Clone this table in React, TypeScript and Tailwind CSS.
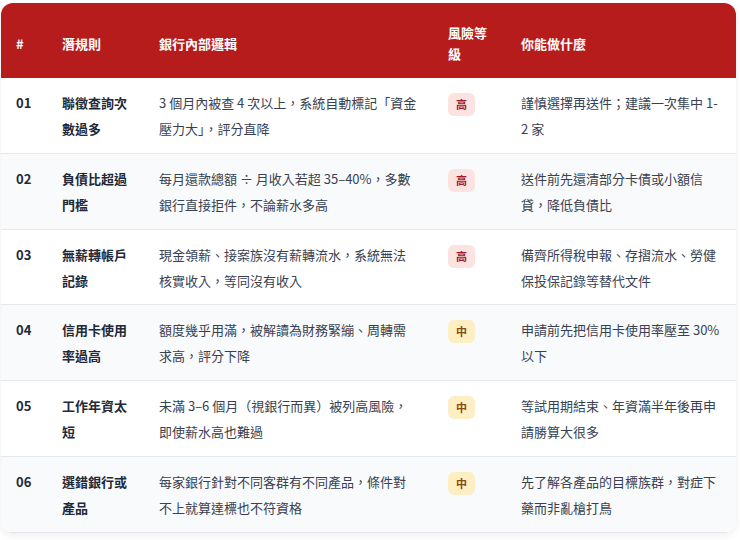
const rows = [
  {
    id: "01",
    rule: "聯徵查詢次數過多",
    logic: "3 個月內被查 4 次以上，系統自動標記「資金壓力大」，評分直降",
    level: "高",
    action: "謹慎選擇再送件；建議一次集中 1-2 家",
  },
  {
    id: "02",
    rule: "負債比超過門檻",
    logic: "每月還款總額 ÷ 月收入若超 35–40%，多數銀行直接拒件，不論薪水多高",
    level: "高",
    action: "送件前先還清部分卡債或小額信貸，降低負債比",
  },
  {
    id: "03",
    rule: "無薪轉帳戶記錄",
    logic: "現金領薪、接案族沒有薪轉流水，系統無法核實收入，等同沒有收入",
    level: "高",
    action: "備齊所得稅申報、存摺流水、勞健保投保記錄等替代文件",
  },
  {
    id: "04",
    rule: "信用卡使用率過高",
    logic: "額度幾乎用滿，被解讀為財務緊繃、周轉需求高，評分下降",
    level: "中",
    action: "申請前先把信用卡使用率壓至 30% 以下",
  },
  {
    id: "05",
    rule: "工作年資太短",
    logic: "未滿 3–6 個月（視銀行而異）被列高風險，即使薪水高也難過",
    level: "中",
    action: "等試用期結束、年資滿半年後再申請勝算大很多",
  },
  {
    id: "06",
    rule: "選錯銀行或產品",
    logic: "每家銀行針對不同客群有不同產品，條件對不上就算達標也不符資格",
    level: "中",
    action: "先了解各產品的目標族群，對症下藥而非亂槍打鳥",
  },
];

const cols = "grid grid-cols-[45px_97px_289px_73px_231px]";

export default function App() {
  return (
    <div
      className="min-h-[540px] bg-white pl-[1px] pt-[3px]"
      style={{ fontFamily: '"Noto Sans CJK TC", "Noto Sans", sans-serif' }}
    >
      <div className="w-[735px] overflow-hidden rounded-xl bg-white shadow-[0_2px_8px_rgba(0,0,0,0.08)]">
        {/* Header */}
        <div className={`${cols} h-[75px] items-center bg-[#b71c1c] pt-[5px] text-[13px] font-bold leading-[21px] text-white`}>
          <div className="pl-[15px] pr-4">#</div>
          <div className="px-4">潛規則</div>
          <div className="px-4">銀行內部邏輯</div>
          <div className="px-4">風險等級</div>
          <div className="px-4">你能做什麼</div>
        </div>

        {/* Rows */}
        {rows.map((r, i) => (
          <div
            key={r.id}
            className={`${cols} border-b border-[#e5e7eb] pt-3 pb-[10.8px] text-[13px] leading-[26px] ${
              i % 2 === 1 ? "bg-[#f9fafb]" : "bg-white"
            }`}
          >
            <div className="pl-[15px] pr-4 font-bold text-[#1f2937]">{r.id}</div>
            <div className="px-4 font-bold text-[#1f2937]">{r.rule}</div>
            <div className="pl-4 pr-[14px] text-[#374151]">{r.logic}</div>
            <div className="px-4">
              <span
                className={`mt-[3px] inline-flex h-[23px] w-[27px] items-center justify-center rounded-md text-[11px] font-bold leading-none ${
                  r.level === "高"
                    ? "bg-[#fde2e2] text-[#9b1c2c]"
                    : "bg-[#fdefc3] text-[#854d0e]"
                }`}
              >
                {r.level}
              </span>
            </div>
            <div className="px-4 text-[#374151]">{r.action}</div>
          </div>
        ))}
      </div>
    </div>
  );
}
